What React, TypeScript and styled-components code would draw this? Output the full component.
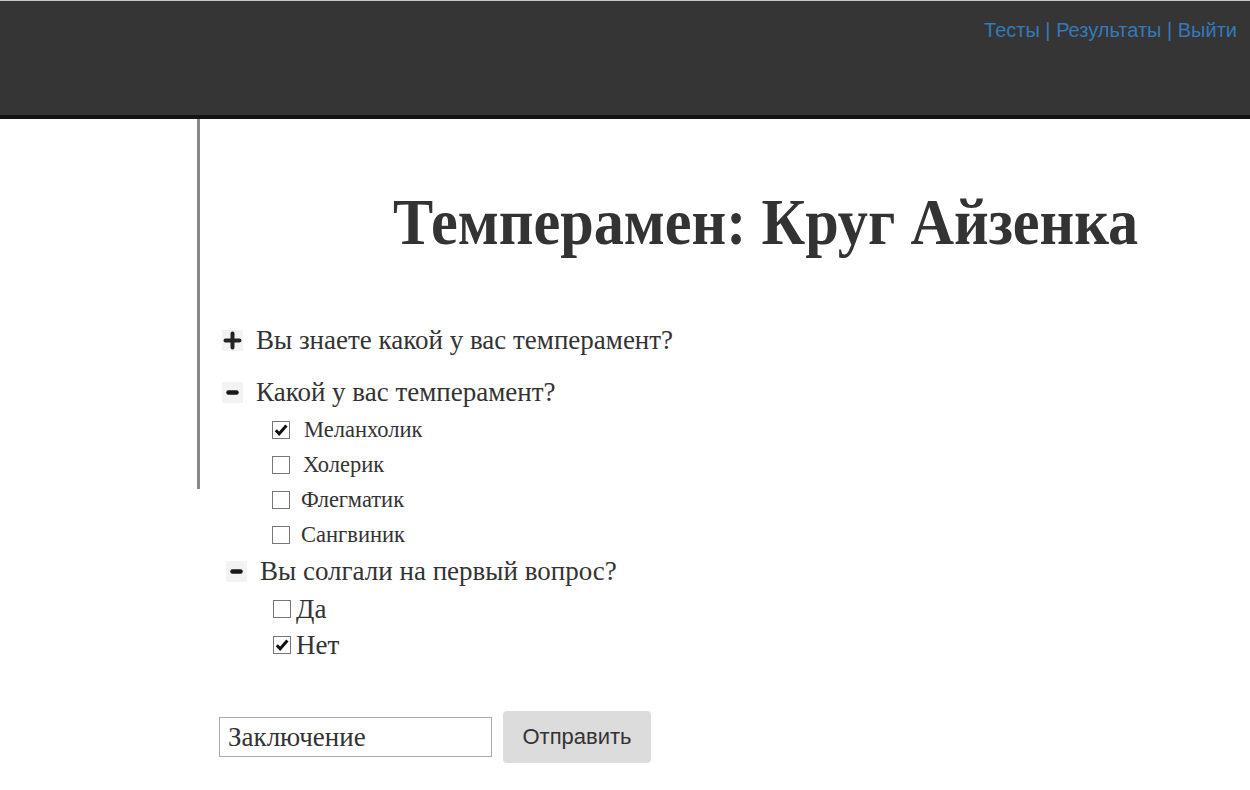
import React from "react";
import styled, { createGlobalStyle } from "styled-components";

const Global = createGlobalStyle`
  html, body { margin: 0; padding: 0; background: #fff; }
  body { font-family: "Liberation Serif", "Times New Roman", serif; color: #333; }
`;

const Header = styled.header`
  height: 119px;
  box-sizing: border-box;
  background: #353535;
  border-top: 1px solid #c8c8c8;
  border-bottom: 4px solid #131313;
  display: flex;
  justify-content: flex-end;
  align-items: flex-start;
  padding: 16px 13px 0 0;
`;

const Nav = styled.nav`
  font-family: "Liberation Sans", Arial, sans-serif;
  font-size: 20px;
  color: #337ab7;
  line-height: 26px;
  a { color: #337ab7; text-decoration: none; }
`;

const Page = styled.div`
  display: flex;
  align-items: flex-start;
`;

const Side = styled.div`
  width: 197px;
  height: 370px;
  border-right: 3px solid #888;
  flex-shrink: 0;
`;

const Content = styled.main`
  flex: 1;
  padding-left: 22px;
`;

const Title = styled.h1`
  margin: 63px 0 0 171px;
  font-size: 66px;
  font-weight: bold;
  line-height: 80px;
  color: #333;
  white-space: nowrap;
  transform: scaleX(0.913);
  transform-origin: left center;
`;

const Questions = styled.div`
  margin-top: 61px;
  display: flex;
  flex-direction: column;
`;

const QRow = styled.div<{ $shift?: number; $mt?: number }>`
  display: flex;
  align-items: center;
  gap: 13px;
  margin-left: ${(p) => p.$shift ?? 0}px;
  margin-top: ${(p) => p.$mt ?? 0}px;
  height: 34px;
  font-size: 27px;
`;

const Toggle = styled.span`
  width: 21px;
  height: 21px;
  background: #f3f3f3;
  display: inline-flex;
  align-items: center;
  justify-content: center;
  flex-shrink: 0;
`;

const Options = styled.div<{ $mt: number }>`
  display: flex;
  flex-direction: column;
  padding-left: 50px;
  margin-top: ${(p) => p.$mt}px;
`;

const Opt = styled.label<{ $gap: number; $big?: boolean }>`
  display: flex;
  align-items: center;
  gap: ${(p) => p.$gap}px;
  height: ${(p) => (p.$big ? 36 : 35)}px;
  font-size: ${(p) => (p.$big ? 27 : 22.5)}px;
  margin-left: ${(p) => (p.$big ? 1 : 0)}px;
`;

const Box = styled.span`
  width: 16px;
  height: 16px;
  border: 1px solid #767676;
  background: #fff;
  display: inline-flex;
  align-items: center;
  justify-content: center;
  flex-shrink: 0;
`;

const Form = styled.form`
  display: flex;
  align-items: center;
  gap: 11px;
  margin: 48px 0 0 -3px;
`;

const Input = styled.input`
  width: 273px;
  height: 40px;
  box-sizing: border-box;
  border: 1px solid #aaa;
  font-family: "Liberation Serif", "Times New Roman", serif;
  font-size: 27px;
  color: #333;
  padding: 0 8px;
  outline: none;
`;

const Button = styled.button`
  width: 148px;
  height: 52px;
  border: none;
  border-radius: 4px;
  background: #dcdcdc;
  font-family: "Liberation Sans", Arial, sans-serif;
  font-size: 22px;
  color: #333;
`;

const Plus = () => (
  <svg width="19" height="19" viewBox="0 0 19 19">
    <path d="M9.5 2.5v14M2.5 9.5h14" stroke="#000" strokeWidth="4" strokeLinecap="round" opacity="0.85" />
  </svg>
);
const Minus = () => (
  <svg width="19" height="19" viewBox="0 0 19 19">
    <path d="M5.5 9.5h8" stroke="#000" strokeWidth="4.5" strokeLinecap="round" opacity="0.9" />
  </svg>
);
const Check = () => (
  <svg width="14" height="14" viewBox="0 0 14 14">
    <path d="M1.8 7.2l3.4 3.6L12.4 2.6" fill="none" stroke="#111" strokeWidth="3" strokeLinejoin="miter" />
  </svg>
);

const CheckBox = ({ on }: { on?: boolean }) => <Box>{on && <Check />}</Box>;

const temperaments = [
  { t: "Меланхолик", on: true, gap: 14 },
  { t: "Холерик", on: false, gap: 13 },
  { t: "Флегматик", on: false, gap: 11 },
  { t: "Сангвиник", on: false, gap: 11 },
];

export default function App() {
  return (
    <>
      <Global />
      <Header>
        <Nav>
          <a href="#">Тесты</a> | <a href="#">Результаты</a> | <a href="#">Выйти</a>
        </Nav>
      </Header>
      <Page>
        <Side />
        <Content>
          <Title>Темперамен: Круг Айзенка</Title>
          <Questions>
            <QRow>
              <Toggle><Plus /></Toggle>
              Вы знаете какой у вас темперамент?
            </QRow>
            <QRow $mt={18}>
              <Toggle><Minus /></Toggle>
              Какой у вас темперамент?
            </QRow>
            <Options $mt={3}>
              {temperaments.map((o) => (
                <Opt key={o.t} $gap={o.gap}>
                  <CheckBox on={o.on} />
                  {o.t}
                </Opt>
              ))}
            </Options>
            <QRow $shift={4} $mt={2}>
              <Toggle><Minus /></Toggle>
              Вы солгали на первый вопрос?
            </QRow>
            <Options $mt={3}>
              <Opt $gap={5} $big><CheckBox />Да</Opt>
              <Opt $gap={5} $big><CheckBox on />Нет</Opt>
            </Options>
          </Questions>
          <Form onSubmit={(e) => e.preventDefault()}>
            <Input defaultValue="Заключение" />
            <Button type="button">Отправить</Button>
          </Form>
        </Content>
      </Page>
    </>
  );
}
